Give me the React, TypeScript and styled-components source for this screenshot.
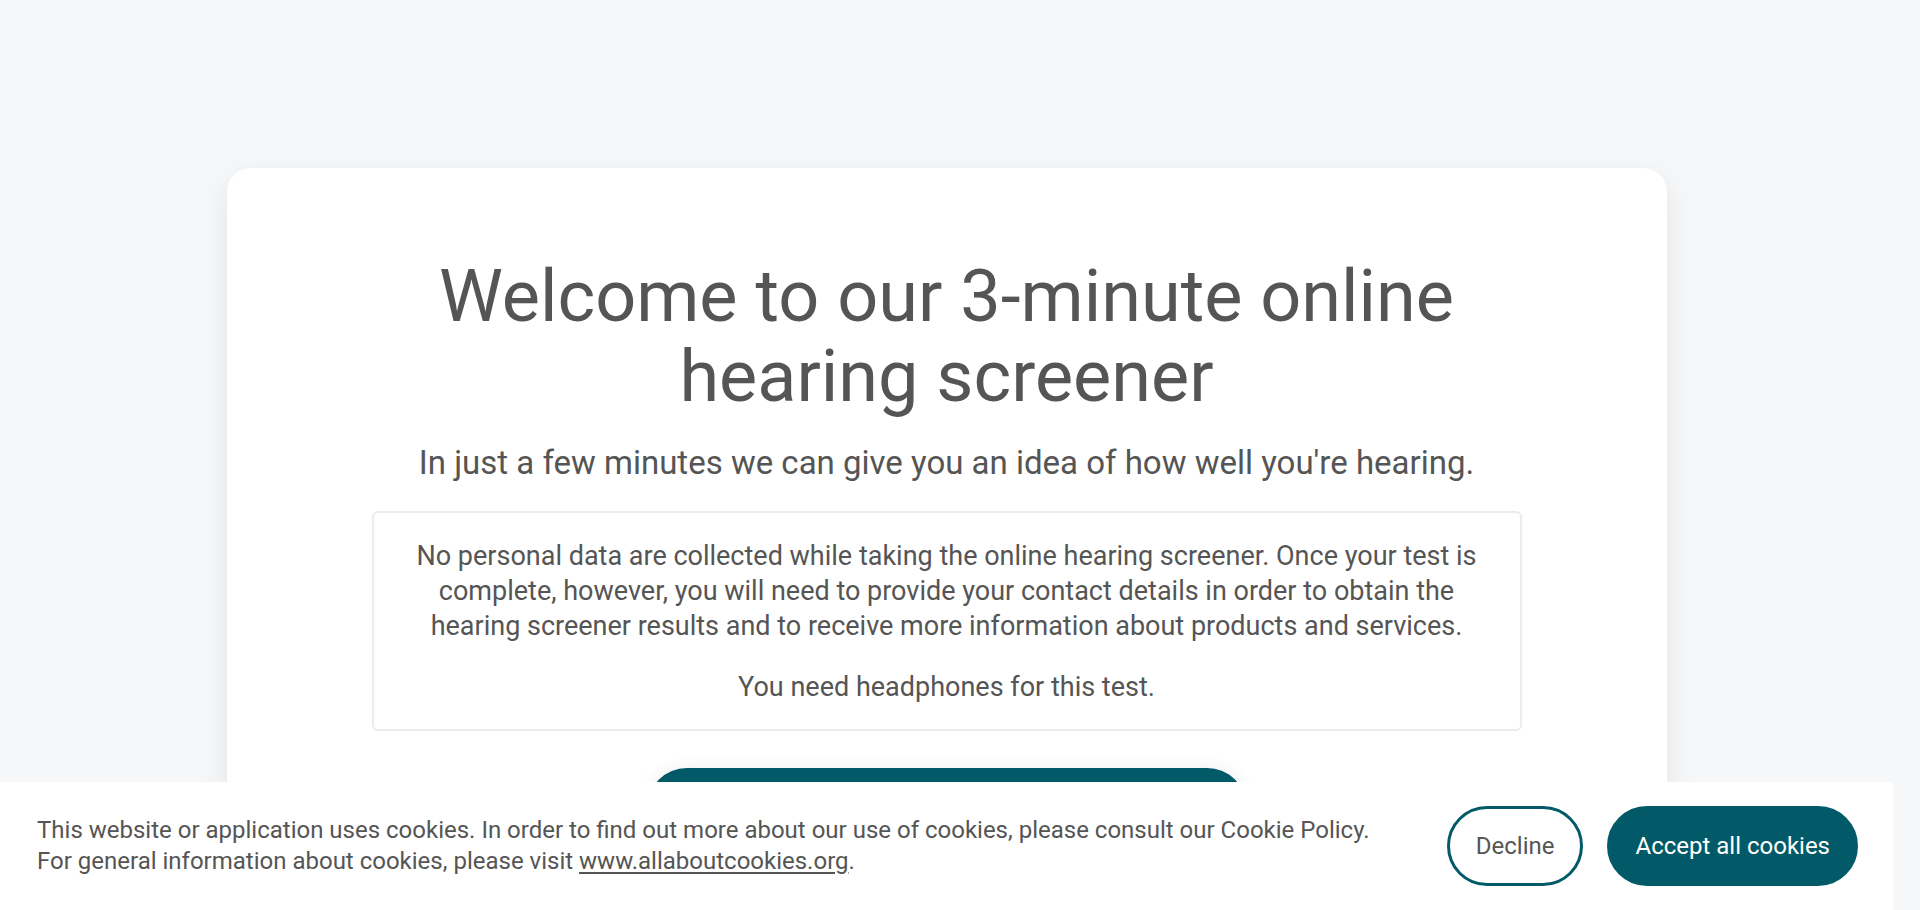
import React from "react";
import styled, { createGlobalStyle } from "styled-components";

const Global = createGlobalStyle`
  html, body {
    margin: 0;
    padding: 0;
    height: 100%;
    overflow: hidden;
    background: #f6f7f9;
  }
  body {
    font-family: Roboto, "Liberation Sans", Arial, sans-serif;
    color: #555555;
  }
  * { box-sizing: border-box; }
`;

const TEAL = "#025a68";

const Page = styled.div`
  width: calc(100vw - 27px);
  display: flex;
  flex-direction: column;
  align-items: center;
  padding-top: 168px;
`;

const Card = styled.main`
  width: 1440px;
  background: #ffffff;
  border-radius: 24px;
  box-shadow: 0 10px 30px rgba(0, 0, 0, 0.08);
  padding: 89px 0 120px;
  display: flex;
  flex-direction: column;
  align-items: center;
`;

const Title = styled.h1`
  margin: 0;
  font-size: 72px;
  line-height: 80px;
  font-weight: 400;
  text-align: center;
  color: #555555;
  max-width: 1100px;
`;

const Subtitle = styled.p`
  margin: 26px 0 0;
  font-size: 33px;
  line-height: 40px;
  text-align: center;
`;

const InfoBox = styled.section`
  width: 1150px;
  margin-top: 28px;
  border: 2px solid #ececec;
  border-radius: 6px;
  padding: 26px 40px 24px;
  display: flex;
  flex-direction: column;
  gap: 26px;
`;

const InfoText = styled.p`
  margin: 0;
  font-size: 27px;
  line-height: 35px;
  text-align: center;
`;

const StartButton = styled.button`
  margin-top: 37px;
  width: 600px;
  height: 80px;
  border: none;
  border-radius: 40px;
  background: ${TEAL};
  color: #ffffff;
  font-family: inherit;
  font-size: 26px;
  box-shadow: 0 4px 20px rgba(0, 0, 0, 0.1);
`;

const Banner = styled.footer`
  position: fixed;
  left: 0;
  bottom: 0;
  width: calc(100vw - 27px);
  height: 128px;
  background: #ffffff;
  display: flex;
  align-items: center;
  justify-content: space-between;
  padding: 0 35px 0 37px;
`;

const BannerText = styled.p`
  margin: 0;
  font-size: 24px;
  line-height: 31px;
  color: #555555;
  a {
    color: #555555;
    text-decoration: underline;
    text-underline-offset: 3px;
  }
`;

const Actions = styled.div`
  display: flex;
  gap: 24px;
`;

const PillButton = styled.button<{ $primary?: boolean }>`
  height: 80px;
  border-radius: 40px;
  font-family: inherit;
  font-size: 24px;
  padding: 0 ${(p) => (p.$primary ? "25px" : "26px")};
  border: 3px solid ${TEAL};
  background: ${(p) => (p.$primary ? TEAL : "#ffffff")};
  color: ${(p) => (p.$primary ? "#ffffff" : "#555555")};
  cursor: pointer;
`;

export default function App() {
  return (
    <>
      <Global />
      <Page>
        <Card>
          <Title>Welcome to our 3-minute online hearing screener</Title>
          <Subtitle>
            In just a few minutes we can give you an idea of how well you're hearing.
          </Subtitle>
          <InfoBox>
            <InfoText>
              No personal data are collected while taking the online hearing screener. Once your
              test is complete, however, you will need to provide your contact details in order to
              obtain the hearing screener results and to receive more information about products
              and services.
            </InfoText>
            <InfoText>You need headphones for this test.</InfoText>
          </InfoBox>
          <StartButton>Start the test</StartButton>
        </Card>
      </Page>
      <Banner>
        <BannerText>
          This website or application uses cookies. In order to find out more about our use of
          cookies, please consult our Cookie Policy.
          <br />
          For general information about cookies, please visit{" "}
          <a href="#">www.allaboutcookies.org</a>.
        </BannerText>
        <Actions>
          <PillButton>Decline</PillButton>
          <PillButton $primary>Accept all cookies</PillButton>
        </Actions>
      </Banner>
    </>
  );
}
